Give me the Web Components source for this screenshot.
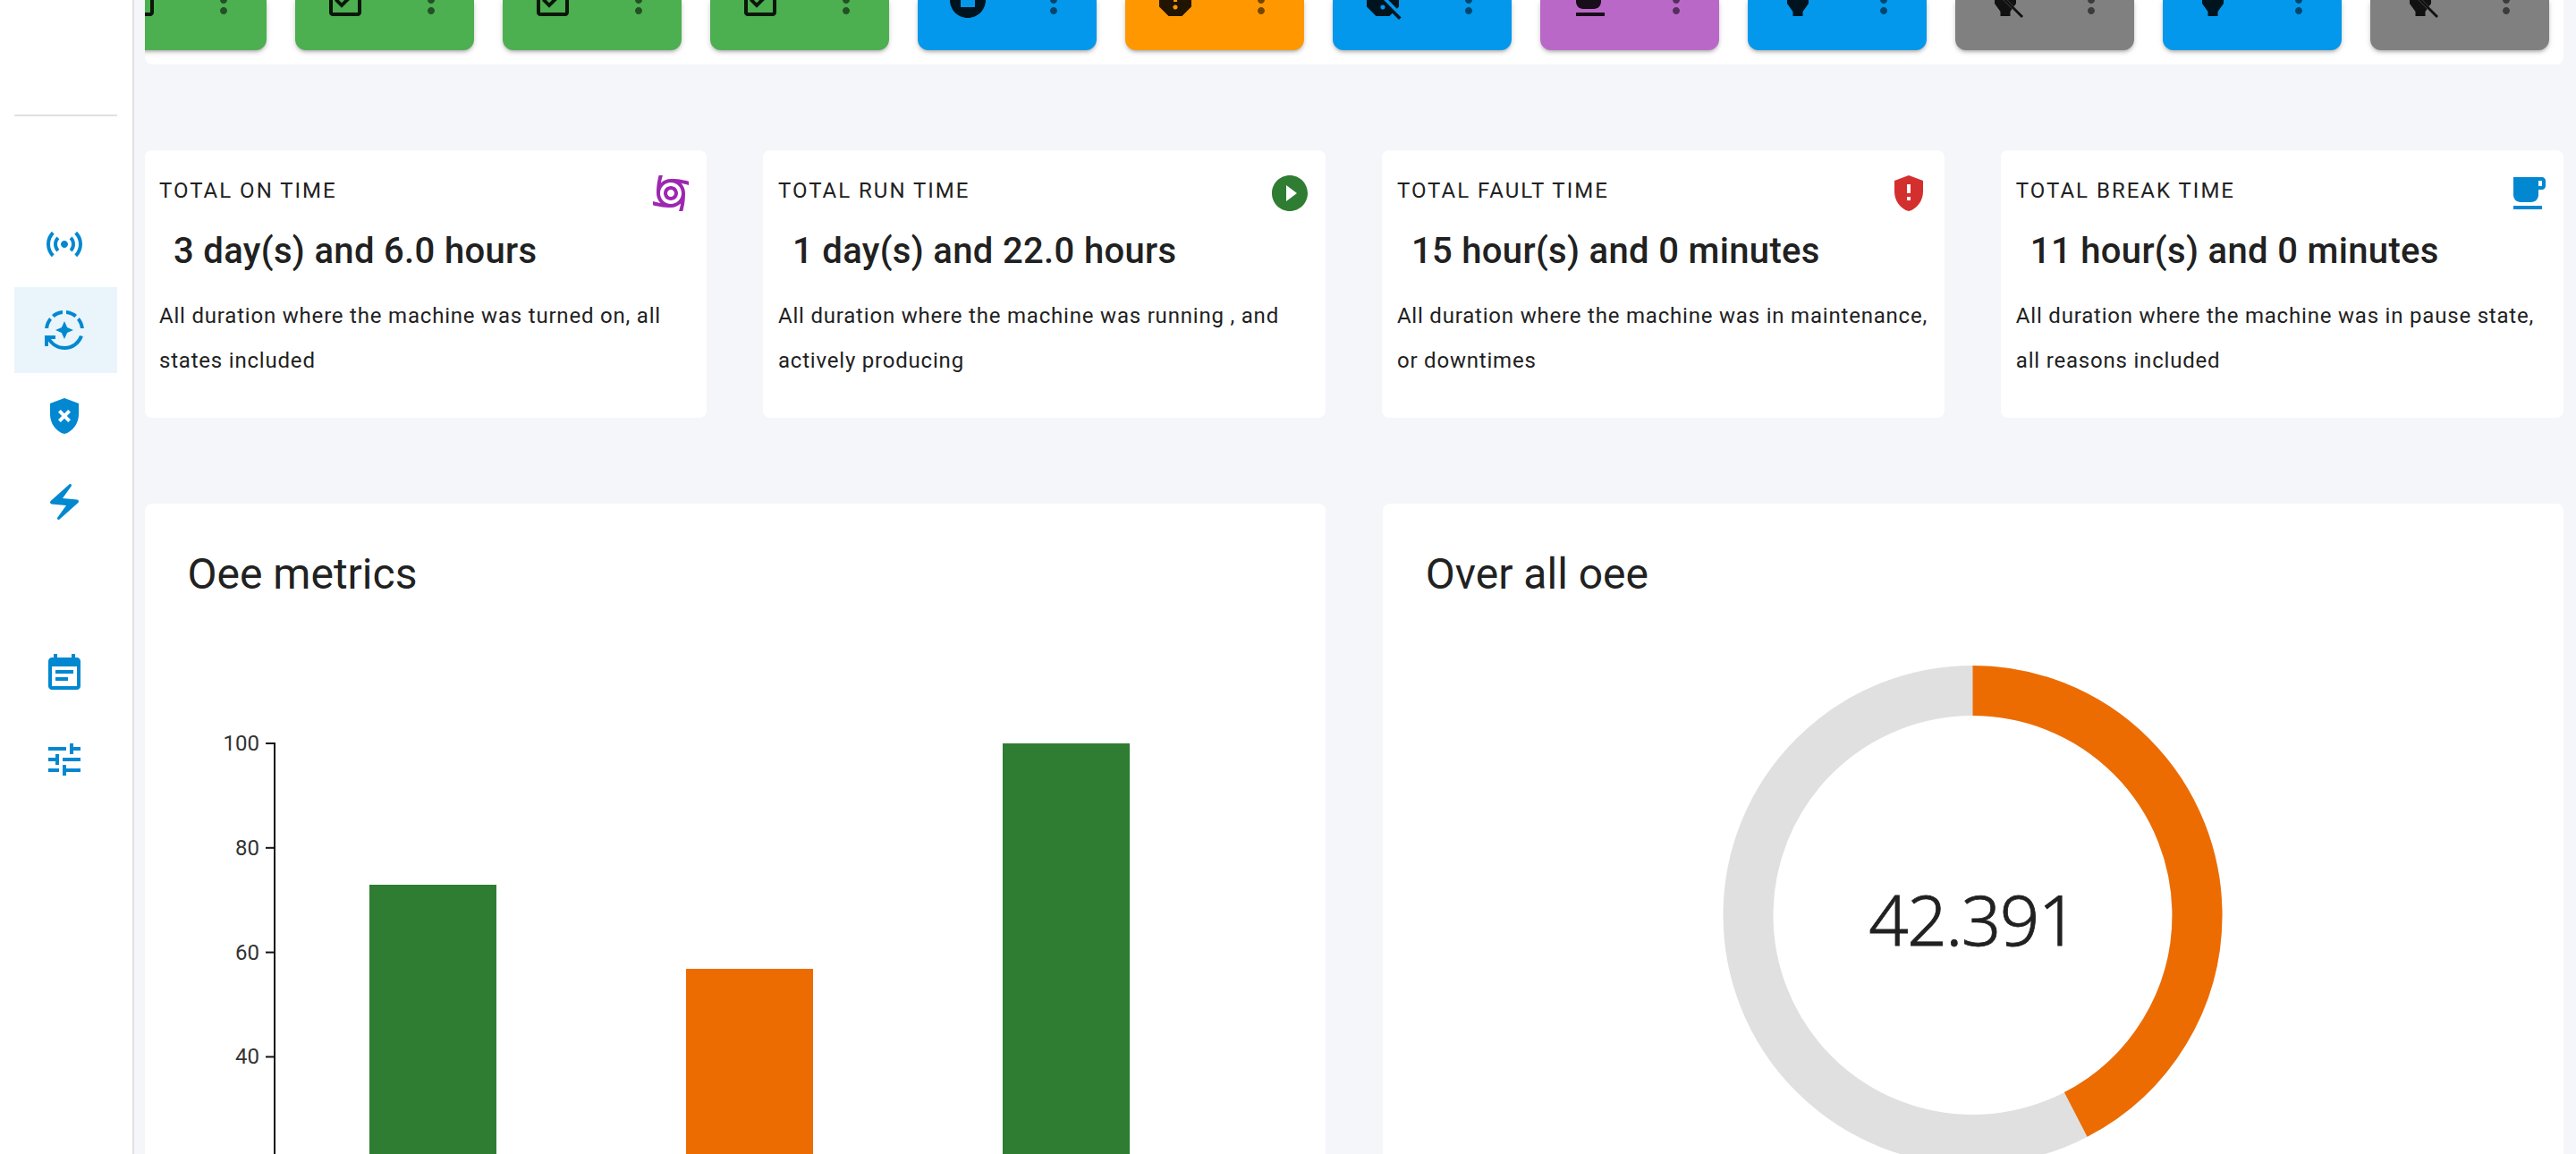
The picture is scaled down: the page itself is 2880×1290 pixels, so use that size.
<!DOCTYPE html>
<html>
<head>
<meta charset="utf-8">
<title>Machine dashboard</title>
<style>
  html, body { margin: 0; height: 100%; overflow: hidden; background: #f5f6fa; }
  body { font-family: Roboto, "Liberation Sans", sans-serif; color: #212121; }
</style>
</head>
<body>
<dash-app>
  <side-nav slot="nav"></side-nav>
  <state-strip slot="strip"></state-strip>
  <div slot="stats">
    <stat-card heading="TOTAL ON TIME" value="3 day(s) and 6.0 hours" icon="cyclone" tint="#9c27b0">All duration where the machine was turned on, all states included</stat-card>
    <stat-card heading="TOTAL RUN TIME" value="1 day(s) and 22.0 hours" icon="play" tint="#2e7d32">All duration where the machine was running , and actively producing</stat-card>
    <stat-card heading="TOTAL FAULT TIME" value="15 hour(s) and 0 minutes" icon="fault" tint="#d32f2f">All duration where the machine was in maintenance, or downtimes</stat-card>
    <stat-card heading="TOTAL BREAK TIME" value="11 hour(s) and 0 minutes" icon="cup" tint="#0288d1">All duration where the machine was in pause state, all reasons included</stat-card>
  </div>
  <chart-card slot="charts" heading="Oee metrics"><oee-bars></oee-bars></chart-card>
  <chart-card slot="charts" heading="Over all oee"><oee-donut value="42.391"></oee-donut></chart-card>
</dash-app>

<script>
// material icon paths, 24 unit box
const ICONS = {
  sensors: 'M7.76 16.24C6.67 15.16 6 13.66 6 12s.67-3.16 1.76-4.24l1.42 1.42C8.45 9.9 8 10.9 8 12c0 1.1.45 2.1 1.17 2.83l-1.41 1.41zm8.48 0C17.33 15.16 18 13.66 18 12s-.67-3.16-1.76-4.24l-1.42 1.42C15.55 9.9 16 10.9 16 12c0 1.1-.45 2.1-1.17 2.83l1.41 1.41zM12 10c-1.1 0-2 .9-2 2s.9 2 2 2 2-.9 2-2-.9-2-2-2zm8 2c0 2.21-.9 4.21-2.35 5.65l1.42 1.42C20.88 17.26 22 14.76 22 12s-1.12-5.26-2.93-7.07l-1.42 1.42C19.1 7.79 20 9.79 20 12zM6.35 6.35 4.93 4.93C3.12 6.74 2 9.24 2 12s1.12 5.26 2.93 7.07l1.42-1.42C4.9 16.21 4 14.21 4 12s.9-4.21 2.35-5.65z',
  automode: 'M19.03 3.56c-1.67-1.39-3.74-2.3-6.03-2.51v2.01c1.73.19 3.31.88 4.61 1.92l1.42-1.42zM11 3.06V1.05c-2.29.2-4.36 1.12-6.03 2.51l1.42 1.42C7.69 3.94 9.27 3.25 11 3.06zM4.98 6.39 3.56 4.97C2.17 6.64 1.26 8.71 1.05 11h2.01c.19-1.73.88-3.31 1.92-4.61zM20.94 11h2.01c-.21-2.29-1.12-4.36-2.51-6.03l-1.42 1.42c1.04 1.3 1.73 2.88 1.92 4.61zM7 12l3.44 1.56L12 17l1.56-3.44L17 12l-3.44-1.56L12 7l-1.56 3.44zM12 21c-3.11 0-5.85-1.59-7.46-4H7v-2H1v6h2v-2.7c1.99 2.84 5.27 4.7 9 4.7 4.87 0 9-3.17 10.44-7.56l-1.96-.45C19.25 18.48 15.92 21 12 21z',
  gppbad: 'M12 2 4 5v6.09c0 5.05 3.41 9.76 8 10.91 4.59-1.15 8-5.86 8-10.91V5l-8-3zm3.5 12.09-1.41 1.41L12 13.42 9.91 15.5 8.5 14.09 10.59 12 8.5 9.91 9.91 8.5 12 10.59l2.09-2.09 1.41 1.41L13.42 12l2.08 2.09z',
  bolt: 'M14.69 2.21 4.33 11.49c-.64.58-.28 1.65.58 1.73L13 14l-4.85 6.76c-.22.31-.19.74.08 1.01.3.3.77.31 1.08.02l10.36-9.28c.64-.58.28-1.65-.58-1.73L11 10l4.85-6.76c.22-.31.19-.74-.08-1.01-.3-.3-.77-.31-1.08-.02z',
  eventnote: 'M17 10H7v2h10v-2zm2-7h-1V1h-2v2H8V1H6v2H5c-1.11 0-1.99.9-1.99 2L3 19c0 1.1.89 2 2 2h14c1.1 0 2-.9 2-2V5c0-1.1-.9-2-2-2zm0 16H5V8h14v11zm-5-5H7v2h7v-2z',
  tune: 'M3 17v2h6v-2H3zM3 5v2h10V5H3zm10 16v-2h8v-2h-8v-2h-2v6h2zM7 9v2H3v2h4v2h2V9H7zm14 4v-2H11v2h10zm-6-4h2V7h4V5h-4V3h-2v6z',
  cyclone: 'M12 8c-2.21 0-4 1.79-4 4s1.79 4 4 4 4-1.79 4-4-1.79-4-4-4zm0 6c-1.1 0-2-.9-2-2s.9-2 2-2 2 .9 2 2-.9 2-2 2zM22 7.47V5.35C20.05 4.77 16.56 4 12 4c-2.15 0-4.11.86-5.54 2.24.13-.85.4-2.4 1.01-4.24H5.35C4.77 3.95 4 7.44 4 12c0 2.15.86 4.11 2.24 5.54-.85-.14-2.4-.4-4.24-1.01v2.12C3.95 19.23 7.44 20 12 20c2.15 0 4.11-.86 5.54-2.24-.14.85-.4 2.4-1.01 4.24h2.12c.58-1.95 1.35-5.44 1.35-10 0-2.15-.86-4.11-2.24-5.54.85.14 2.4.4 4.24 1.01zM12 18c-3.31 0-6-2.69-6-6s2.69-6 6-6 6 2.69 6 6-2.69 6-6 6z',
  play: 'M12 2C6.48 2 2 6.48 2 12s4.48 10 10 10 10-4.48 10-10S17.52 2 12 2zm-2 14.5v-9l6 4.5-6 4.5z',
  fault: 'M12 2 4 5v6.09c0 5.05 3.41 9.76 8 10.91 4.59-1.15 8-5.86 8-10.91V5l-8-3zm1 14h-2v-2h2v2zm0-4h-2V7h2v5z',
  cup: 'M20 3H4v10c0 2.21 1.79 4 4 4h6c2.21 0 4-1.79 4-4v-3h2c1.11 0 2-.9 2-2V5c0-1.11-.89-2-2-2zm0 5h-2V5h2v3zM4 19h16v2H4z',
  turnedin: 'M19 3h-4.18C14.4 1.84 13.3 1 12 1s-2.4.84-2.82 2H5c-.14 0-.27.01-.4.04-.39.08-.74.28-1.01.55-.18.18-.33.4-.43.64S3 4.72 3 5v14c0 .27.06.54.16.78s.25.45.43.64c.27.27.62.47 1.01.55.13.02.26.03.4.03h14c1.1 0 2-.9 2-2V5c0-1.1-.9-2-2-2zm-7-.25c.41 0 .75.34.75.75s-.34.75-.75.75-.75-.34-.75-.75.34-.75.75-.75zM19 19H5V5h14v14zm-1-10.58L16.58 7l-6.58 6.59L7.42 11 6 12.42l4 4z',
  stop: 'M12 2C6.48 2 2 6.48 2 12s4.48 10 10 10 10-4.48 10-10S17.52 2 12 2zm4 14H8V8h8v8z',
  report: 'M15.73 3H8.27L3 8.27v7.46L8.27 21h7.46L21 15.73V8.27L15.73 3zM12 17.3c-.72 0-1.3-.58-1.3-1.3 0-.72.58-1.3 1.3-1.3.72 0 1.3.58 1.3 1.3 0 .72-.58 1.3-1.3 1.3zm1-4.3h-2V7h2v6z',
  reportoff: 'M11 7h2v2.92l6.91 6.91 1.09-1.1V8.27L15.73 3H8.27L7.18 4.1 11 7.92zm11.27 14.73l-20-20.01L1 2.99l3.64 3.64L3 8.27v7.46L8.27 21h7.46l1.64-1.63L21 23l1.27-1.27zM12 17.3c-.72 0-1.3-.58-1.3-1.3s.58-1.3 1.3-1.3 1.3.58 1.3 1.3-.58 1.3-1.3 1.3z',
  bulb: 'M12 2C8 2 6 5 6 9v5l3.25 4.5V21h5.5v-2.5L18 14V9c0-4-2-7-6-7z',
  bulboff: 'M6.8 5.6C7.5 3.5 9.5 2 12 2c4 0 6 3 6 7v5l-1.2 1.6zM6 7.2V14l3.25 4.5V21h5.5v-2.5L15.8 17zM3 2l19 19-1 1L2 3z',
  dots: 'M12 8c1.1 0 2-.9 2-2s-.9-2-2-2-2 .9-2 2 .9 2 2 2zm0 2c-1.1 0-2 .9-2 2s.9 2 2 2 2-.9 2-2-.9-2-2-2zm0 6c-1.1 0-2 .9-2 2s.9 2 2 2 2-.9 2-2-.9-2-2-2z'
};

class MatIcon extends HTMLElement {
  constructor() {
    super();
    this.attachShadow({ mode: 'open' });
  }
  connectedCallback() {
    const d = ICONS[this.getAttribute('name')];
    this.shadowRoot.innerHTML = `
      <style>
        :host { display: block; width: 48px; height: 48px; flex: none; }
        svg { display: block; width: 100%; height: 100%; fill: currentColor; }
      </style>
      <svg viewBox="0 0 24 24"><path d="${d}"></path></svg>
    `;
  }
}
customElements.define('mat-icon', MatIcon);

class DashApp extends HTMLElement {
  constructor() {
    super();
    this.attachShadow({ mode: 'open' });
    this.shadowRoot.innerHTML = `
      <style>
        :host { display: flex; width: 2880px; height: 1290px; overflow: hidden; }
        main { flex: 1; min-width: 0; padding: 0 14px 0 11.5px; box-sizing: border-box; display: flex; flex-direction: column; }
        .stats { margin-top: 96px; }
        .charts { display: grid; grid-template-columns: 1fr 1fr; column-gap: 64px; margin-top: 96px; flex: 1; min-height: 0; }
      </style>
      <slot name="nav"></slot>
      <main>
        <slot name="strip"></slot>
        <div class="stats"><slot name="stats"></slot></div>
        <div class="charts"><slot name="charts"></slot></div>
      </main>
    `;
  }
}
customElements.define('dash-app', DashApp);

document.querySelector('[slot=stats]').style.cssText = 'display:grid;grid-template-columns:repeat(4,1fr);column-gap:63.3px';

class SideNav extends HTMLElement {
  constructor() {
    super();
    this.attachShadow({ mode: 'open' });
    const items = [['sensors'], ['automode', true], ['gppbad'], ['bolt'], [null], ['eventnote'], ['tune']];
    this.shadowRoot.innerHTML = `
      <style>
        :host { display: block; width: 150px; height: 100%; box-sizing: border-box; flex: none; background: #fff; border-right: 2px solid #dfe1e6; padding: 128px 17px 0 16px; }
        hr { margin: 0 0 95px; border: 0; border-top: 2px solid #e0e0e0; }
        .item { height: 96px; box-sizing: border-box; padding-left: 32px; display: flex; align-items: center; color: #0288d1; }
        .item.on { background: #e9f5fb; }
      </style>
      <hr>
      ${items.map(([n, on]) => `<div class="item${on ? ' on' : ''}">${n ? `<mat-icon name="${n}"></mat-icon>` : ''}</div>`).join('')}
    `;
  }
}
customElements.define('side-nav', SideNav);

class StateStrip extends HTMLElement {
  constructor() {
    super();
    this.attachShadow({ mode: 'open' });
    const cards = [
      ['turnedin', '#4caf50'], ['turnedin', '#4caf50'], ['turnedin', '#4caf50'], ['turnedin', '#4caf50'],
      ['stop', '#0398eb'], ['report', '#ff9800'], ['reportoff', '#0398eb'], ['cup', '#ba68c8'],
      ['bulb', '#0398eb'], ['bulboff', '#808080'], ['bulb', '#0398eb'], ['bulboff', '#808080']
    ];
    this.shadowRoot.innerHTML = `
      <style>
        :host { display: block; height: 72px; flex: none; background: #fff; border-radius: 0 0 8px 8px; overflow: hidden; }
        .row { display: flex; gap: 32px; margin-left: -63.5px; height: 56px; }
        .card { flex: none; width: 200px; height: 56px; border-radius: 0 0 12px 12px; display: flex; justify-content: space-between; padding: 0 24px 0 32px; box-sizing: border-box; box-shadow: 0 3px 3px -2px rgba(0,0,0,.2), 0 3px 4px 0 rgba(0,0,0,.14), 0 1px 8px 0 rgba(0,0,0,.08); }
        mat-icon { margin-top: -24px; color: rgba(0,0,0,.87); }
        mat-icon.dots { color: rgba(0,0,0,.54); width: 48px; height: 48px; margin-top: -24px; }
      </style>
      <div class="row">
        ${cards.map(([n, c]) => `<div class="card" style="background:${c}"><mat-icon name="${n}"></mat-icon><mat-icon class="dots" name="dots"></mat-icon></div>`).join('')}
      </div>
    `;
  }
}
customElements.define('state-strip', StateStrip);

class StatCard extends HTMLElement {
  constructor() {
    super();
    this.attachShadow({ mode: 'open' });
  }
  connectedCallback() {
    this.shadowRoot.innerHTML = `
      <style>
        :host { display: block; height: 299px; box-sizing: border-box; background: #fff; border-radius: 8px; padding: 24px 16px 0 16.5px; }
        .top { display: flex; justify-content: space-between; }
        .heading { font-size: 24px; line-height: 42px; letter-spacing: 2px; margin-top: 0; }
        mat-icon { color: ${this.getAttribute('tint')}; }
        .value { font-size: 40px; font-weight: 500; line-height: 60px; letter-spacing: .33px; padding-left: 16px; margin-top: 11px; }
        .text { font-size: 24px; line-height: 49.5px; letter-spacing: .8px; margin-top: 18px; margin-right: -8px; }
      </style>
      <div class="top"><div class="heading">${this.getAttribute('heading')}</div><mat-icon name="${this.getAttribute('icon')}"></mat-icon></div>
      <div class="value">${this.getAttribute('value')}</div>
      <div class="text"><slot></slot></div>
    `;
  }
}
customElements.define('stat-card', StatCard);

class ChartCard extends HTMLElement {
  constructor() {
    super();
    this.attachShadow({ mode: 'open' });
    this.shadowRoot.innerHTML = `
      <style>
        :host { display: block; background: #fff; border-radius: 8px 8px 0 0; padding: 49px 48px 0; box-sizing: border-box; overflow: hidden; height: 727px; }
        h2 { margin: 0; font-size: 48px; font-weight: 400; line-height: 60px; }
      </style>
      <h2>${this.getAttribute('heading')}</h2>
      <slot></slot>
    `;
  }
}
customElements.define('chart-card', ChartCard);

class OeeBars extends HTMLElement {
  constructor() {
    super();
    this.attachShadow({ mode: 'open' });
    // y = 831 at 100, 117px per 20 units, page coords minus the svg origin
    const ox = 209.5, oy = 672;
    const ticks = [100, 80, 60, 40].map((v, i) => {
      const y = 831 + i * 116.8 - oy;
      return `<line x1="${296.5 - ox}" x2="${306.5 - ox}" y1="${y}" y2="${y}"></line><text x="${289.5 - ox}" y="${y + 8}">${v}</text>`;
    }).join('');
    const bars = [[412.5, 989, '#2e7d32'], [766.5, 1083, '#ed6c02'], [1120.5, 831, '#2e7d32']].map(([x, y, c]) =>
      `<rect x="${x - ox}" y="${y - oy}" width="142" height="${1300 - y}" fill="${c}"></rect>`).join('');
    this.shadowRoot.innerHTML = `
      <style>
        :host { display: block; }
        svg { display: block; overflow: visible; }
        line { stroke: #111; stroke-width: 2; }
        text { font: 24px Roboto, sans-serif; fill: #333; text-anchor: end; }
      </style>
      <svg width="1224" height="640">
        <line x1="${306.5 - ox}" x2="${306.5 - ox}" y1="${830 - oy}" y2="640"></line>
        ${ticks}
        ${bars}
      </svg>
    `;
  }
}
customElements.define('oee-bars', OeeBars);

class OeeDonut extends HTMLElement {
  constructor() {
    super();
    this.attachShadow({ mode: 'open' });
  }
  connectedCallback() {
    const value = this.getAttribute('value');
    const r = 251, len = 2 * Math.PI * r;
    this.shadowRoot.innerHTML = `
      <style>
        :host { display: block; }
        svg { display: block; overflow: visible; }
        text { font: 300 78px "Noto Sans", "Open Sans", sans-serif; fill: #212121; stroke: #212121; stroke-width: .8px; text-anchor: middle; letter-spacing: -1.5px; }
      </style>
      <svg width="1224" height="640">
        <g transform="translate(611.5 351)">
          <circle r="${r}" fill="none" stroke="#e0e0e0" stroke-width="56"></circle>
          <circle r="${r}" fill="none" stroke="#ed6c02" stroke-width="56" transform="rotate(-90)" stroke-dasharray="${len * parseFloat(value) / 100} ${len}"></circle>
          <text y="34">${value}</text>
        </g>
      </svg>
    `;
  }
}
customElements.define('oee-donut', OeeDonut);
</script>
</body>
</html>
